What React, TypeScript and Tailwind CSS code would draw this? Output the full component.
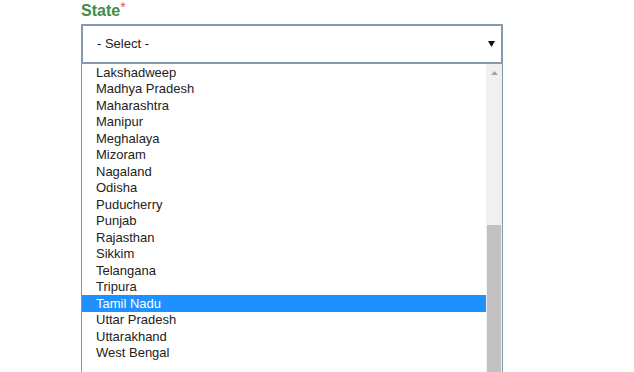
const states = [
  "Lakshadweep",
  "Madhya Pradesh",
  "Maharashtra",
  "Manipur",
  "Meghalaya",
  "Mizoram",
  "Nagaland",
  "Odisha",
  "Puducherry",
  "Punjab",
  "Rajasthan",
  "Sikkim",
  "Telangana",
  "Tripura",
  "Tamil Nadu",
  "Uttar Pradesh",
  "Uttarakhand",
  "West Bengal",
];

const selected = "Tamil Nadu";

const App = () => {
  return (
    <div className="h-[372px] w-full overflow-hidden bg-white pl-[81px] font-['Liberation_Sans',Arial,sans-serif]">
      <label className="block h-[24px] pt-px text-[16px] font-bold leading-[20px] text-[#448c44]">
        State<span className="relative -top-[1px] align-top text-[14px] font-normal leading-[14px] text-[#e0584d]">*</span>
      </label>

      <div className="w-[422px]">
        <div className="flex h-[40px] items-center justify-between border-2 border-[#8797ae] bg-white pl-[14px] pr-[6px] text-[13px] text-[#222]">
          <span>- Select -</span>
          <svg width="7" height="6" viewBox="0 0 7 6">
            <path d="M0 0h7L3.5 6z" fill="#111" />
          </svg>
        </div>

        <div className="flex h-[308px] border-x border-[#8494aa] bg-white">
          <ul className="flex-1 overflow-hidden">
            {states.map((s) => (
              <li
                key={s}
                className={`flex h-[16.5px] items-center pl-[14px] text-[13px] ${
                  s === selected ? "bg-[#1e90ff] text-white" : "text-[#222]"
                }`}
              >
                {s}
              </li>
            ))}
          </ul>

          <div className="flex w-[16px] flex-col bg-[#f0f0f0]">
            <div className="flex h-[17px] items-center justify-center">
              <svg width="7" height="4" viewBox="0 0 7 4">
                <path d="M0 4L3.5 0L7 4z" fill="#a3a3a3" />
              </svg>
            </div>
            <div className="h-[144px]" />
            <div className="mx-px flex-1 bg-[#c1c1c1]" />
          </div>
        </div>
      </div>
    </div>
  );
};

export default App;
